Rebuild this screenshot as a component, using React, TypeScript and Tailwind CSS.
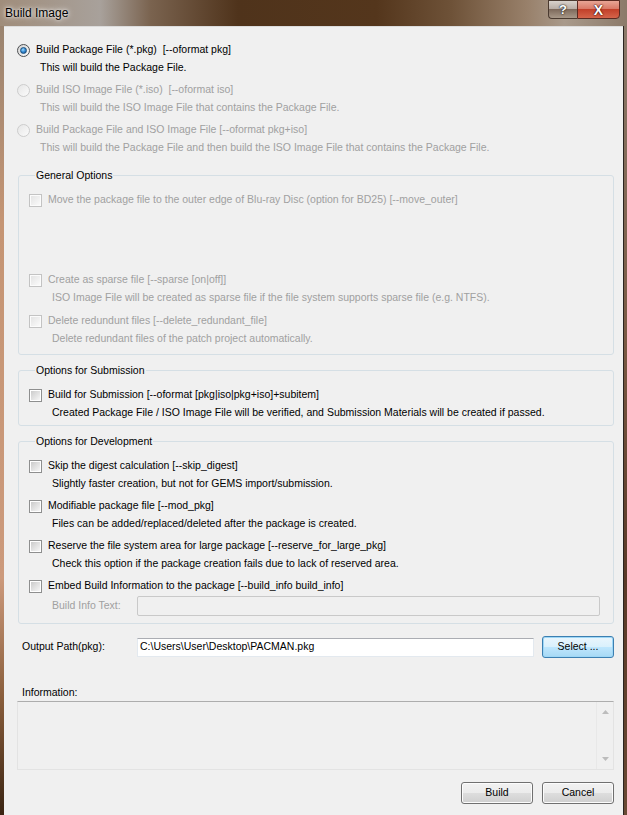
import React from "react";

const GRAY = "text-[#a0a0a0]";

function Radio({ checked, disabled }: { checked?: boolean; disabled?: boolean }) {
  if (disabled) {
    return (
      <span className="flex h-[13px] w-[13px] shrink-0 items-center justify-center rounded-full border border-[#cdcdcd] bg-[linear-gradient(135deg,#e6e6e6,#fbfbfb)]" />
    );
  }
  return (
    <span className="flex h-[13px] w-[13px] shrink-0 items-center justify-center rounded-full border border-[#4d4f52] bg-[linear-gradient(135deg,#d2d2d2,#fdfdfd)]">
      {checked && (
        <span className="h-[7px] w-[7px] rounded-full border border-[#1b4f7e] bg-[radial-gradient(circle_at_40%_35%,#9fdcff_0%,#3a8fd6_45%,#0d4c8c_100%)]" />
      )}
    </span>
  );
}

function Check({ disabled }: { disabled?: boolean }) {
  return (
    <span
      className={
        "flex h-[13px] w-[13px] shrink-0 items-center justify-center border " +
        (disabled ? "border-[#c3c3c3] bg-[#fbfbfb]" : "border-[#8e8f8f] bg-white")
      }
    >
      <span
        className={
          "h-[9px] w-[9px] " +
          (disabled
            ? "bg-[linear-gradient(135deg,#e4e4e4,#fafafa)]"
            : "bg-[linear-gradient(135deg,#cbcbcb,#f6f6f6)]")
        }
      />
    </span>
  );
}

function Item({
  control,
  label,
  desc,
  disabled,
}: {
  control: React.ReactNode;
  label: string;
  desc?: string;
  disabled?: boolean;
}) {
  return (
    <div className={disabled ? GRAY : "text-black"}>
      <div className="flex h-[16px] items-center gap-[6px]">
        {control}
        <span className="whitespace-pre">{label}</span>
      </div>
      {desc && <div className="mt-[1px] flex h-[18px] items-center pl-[23px] whitespace-pre">{desc}</div>}
    </div>
  );
}

function Group({ title, children, className }: { title: string; children: React.ReactNode; className?: string }) {
  return (
    <fieldset className={"rounded-[3px] border border-[#d5dfe5] pl-[10px] pr-[8px] " + (className || "")}>
      <legend className="ml-[6px] h-[14px] px-[1px] leading-[14px] text-black">{title}</legend>
      {children}
    </fieldset>
  );
}

function WinButton({ label, focused }: { label: string; focused?: boolean }) {
  return (
    <button
      className={
        "flex h-[22px] w-[72px] items-center justify-center rounded-[3px] border text-black " +
        (focused
          ? "border-[#3c7fb1] bg-[linear-gradient(#eaf6fd_0%,#d9f0fc_50%,#bee6fd_51%,#a7d9f5_100%)] shadow-[inset_0_0_0_1px_#9ed7f6]"
          : "border-[#707070] bg-[linear-gradient(#f2f2f2_0%,#ebebeb_50%,#dddddd_51%,#cfcfcf_100%)] shadow-[inset_0_0_0_1px_#fcfcfc]")
      }
    >
      {label}
    </button>
  );
}

export default function App() {
  return (
    <div className="flex h-[815px] w-[627px] flex-col overflow-hidden bg-[#6b5038] font-['Liberation_Sans',Arial,sans-serif] text-[10.5px]">
      {/* title bar */}
      <div className="flex h-[26px] shrink-0 items-start justify-between bg-[linear-gradient(90deg,#a08d7b_0%,#a8a19b_16%,#7a634f_24%,#4f331b_38%,#54361c_60%,#6e5238_72%,#98806a_84%,#a99a8b_90%,#8c7a6a_100%)] pl-[5px] pr-[7px]">
        <span className="mt-[6px] text-[12px] leading-[14px] text-black [text-shadow:0_0_6px_rgba(255,255,255,0.95),0_0_3px_rgba(255,255,255,0.9)]">
          Build Image
        </span>
        <div className="flex h-[19px]">
          <div className="flex w-[29px] items-center justify-center rounded-bl-[4px] border border-r-0 border-[#4a3a30] bg-[linear-gradient(#d9d2cc_0%,#b9aea6_45%,#7e6a5c_50%,#a89888_100%)] text-[13px] font-bold leading-none text-white [text-shadow:0_0_2px_#222,0_0_1px_#000]">
            ?
          </div>
          <div className="flex w-[43px] items-center justify-center rounded-br-[4px] border border-[#5a2a22] bg-[linear-gradient(#e8a595_0%,#d97a68_45%,#c2402a_50%,#d5644a_100%)] text-[14px] font-bold leading-none text-white [text-shadow:0_0_2px_#400,0_0_1px_#000]">
            X
          </div>
        </div>
      </div>

      <div className="flex flex-1">
        <div className="w-[4px] bg-[linear-gradient(#9a8470_0%,#c59574_25%,#cc9a7c_70%,#8a5e3c_85%,#3a2412_100%)]" />
        <div className="flex flex-1 flex-col border-t border-[#dcdcdc] bg-[#f0f0f0] pl-[14px] pr-[9px] pt-[15px]">
          {/* output format radios */}
          <div className="-ml-px flex flex-col gap-[5px]">
            <Item control={<Radio checked />} label="Build Package File (*.pkg)  [--oformat pkg]" desc="This will build the Package File." />
            <Item
              disabled
              control={<Radio disabled />}
              label="Build ISO Image File (*.iso)  [--oformat iso]"
              desc="This will build the ISO Image File that contains the Package File."
            />
            <Item
              disabled
              control={<Radio disabled />}
              label="Build Package File and ISO Image File [--oformat pkg+iso]"
              desc="This will build the Package File and then build the ISO Image File that contains the Package File."
            />
          </div>

          <Group title="General Options" className="mt-[11px] pb-[6px] pt-[10px]">
            <Item
              disabled
              control={<Check disabled />}
              label="Move the package file to the outer edge of Blu-ray Disc (option for BD25) [--move_outer]"
            />
            <div className="mt-[64px] flex flex-col gap-[6px]">
              <Item
                disabled
                control={<Check disabled />}
                label="Create as sparse file [--sparse [on|off]]"
                desc="ISO Image File will be created as sparse file if the file system supports sparse file (e.g. NTFS)."
              />
              <Item
                disabled
                control={<Check disabled />}
                label="Delete redundunt files [--delete_redundant_file]"
                desc="Delete redundant files of the patch project automatically."
              />
            </div>
          </Group>

          <Group title="Options for Submission" className="mt-[8px] pb-[3px] pt-[10px]">
            <Item
              control={<Check />}
              label="Build for Submission [--oformat [pkg|iso|pkg+iso]+subitem]"
              desc="Created Package File / ISO Image File will be verified, and Submission Materials will be created if passed."
            />
          </Group>

          <Group title="Options for Development" className="mt-[8px] pb-[7px] pt-[10px]">
            <div className="flex flex-col gap-[5px]">
              <Item
                control={<Check />}
                label="Skip the digest calculation [--skip_digest]"
                desc="Slightly faster creation, but not for GEMS import/submission."
              />
              <Item
                control={<Check />}
                label="Modifiable package file [--mod_pkg]"
                desc="Files can be added/replaced/deleted after the package is created."
              />
              <Item
                control={<Check />}
                label="Reserve the file system area for large package [--reserve_for_large_pkg]"
                desc="Check this option if the package creation fails due to lack of reserved area."
              />
              <div>
                <Item control={<Check />} label="Embed Build Information to the package [--build_info build_info]" />
                <div className="mt-[2px] flex h-[20px] items-center pr-[5px]">
                  <span className={"w-[108px] shrink-0 whitespace-nowrap pl-[23px] " + GRAY}>Build Info Text:</span>
                  <div className="h-[20px] flex-1 rounded-[2px] border border-[#c9c9c9] bg-[#f0f0f0]" />
                </div>
              </div>
            </div>
          </Group>

          {/* output path */}
          <div className="mt-[12px] flex h-[22px] items-center">
            <span className="w-[119px] shrink-0 pl-[4px] text-black">Output Path(pkg):</span>
            <div className="flex h-[19px] w-[397px] items-center border border-[#e3e9ef] border-t-[#abadb3] bg-white pl-[2px] text-black">
              C:\Users\User\Desktop\PACMAN.pkg
            </div>
            <div className="ml-auto">
              <WinButton label="Select ..." focused />
            </div>
          </div>

          {/* information */}
          <div className="mt-[27px] h-[14px] pl-[4px] leading-[14px] text-black">Information:</div>
          <div className="mt-[2px] -ml-px flex h-[69px] border border-[#e3e3e3] border-t-[#adadad]">
            <div className="flex-1" />
            <div className="flex w-[17px] flex-col items-center justify-between border-l border-[#e8e8e8] py-[8px]">
              <svg width="7" height="4" viewBox="0 0 7 4">
                <path d="M0 4 L3.5 0 L7 4 Z" fill="#bcbcbc" />
              </svg>
              <svg width="7" height="4" viewBox="0 0 7 4">
                <path d="M0 0 L3.5 4 L7 0 Z" fill="#bcbcbc" />
              </svg>
            </div>
          </div>

          {/* dialog buttons */}
          <div className="mt-[12px] flex justify-end gap-[9px]">
            <WinButton label="Build" />
            <WinButton label="Cancel" />
          </div>
        </div>
        <div className="w-[4px] border-l border-[#2b2420] bg-[linear-gradient(#8c7a6a_0%,#7a5a44_40%,#5a3a28_70%,#6a4a34_100%)]" />
      </div>
    </div>
  );
}
